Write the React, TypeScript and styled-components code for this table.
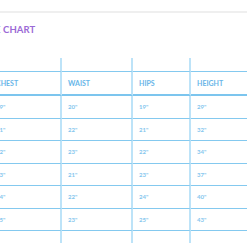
import React from 'react'
import styled, { createGlobalStyle } from 'styled-components'

const GlobalStyle = createGlobalStyle`
  html, body {
    margin: 0;
    padding: 0;
    background: #ffffff;
    overflow: hidden;
  }
  body {
    font-family: Lato, "Liberation Sans", sans-serif;
  }
`

const columns = [
  { key: 'chest', label: 'CHEST', width: 72 },
  { key: 'waist', label: 'WAIST', width: 71 },
  { key: 'hips', label: 'HIPS', width: 58 },
  { key: 'height', label: 'HEIGHT', width: 80 },
]

const rows = [
  { chest: '19"', waist: '20"', hips: '19"', height: '29"' },
  { chest: '21"', waist: '22"', hips: '21"', height: '32"' },
  { chest: '22"', waist: '23"', hips: '22"', height: '34"' },
  { chest: '23"', waist: '21"', hips: '23"', height: '37"' },
  { chest: '24"', waist: '22"', hips: '24"', height: '40"' },
  { chest: '25"', waist: '23"', hips: '25"', height: '43"' },
]

const Page = styled.div`
  width: 247px;
  height: 247px;
  overflow: hidden;
  padding-top: 11px;
  box-sizing: border-box;
`

const Rule = styled.div`
  height: 2px;
  background: #efefef;
`

const Title = styled.h2`
  margin: 11px 0 0 -19px;
  font-size: 9.5px;
  line-height: 12px;
  font-weight: 700;
  letter-spacing: 0.1px;
  color: #9b6ad6;
  white-space: nowrap;
`

const Grid = styled.div<{ cols: string }>`
  display: grid;
  grid-template-columns: ${p => p.cols};
  grid-template-rows: 13px 25px repeat(6, 22.5px) 12px;
  margin: 22px 0 0 -10px;
  width: max-content;
`

const Cell = styled.div<{ kind: 'spacer' | 'head' | 'body' }>`
  box-sizing: border-box;
  display: flex;
  align-items: center;
  padding-left: 6px;
  border-right: 2px solid #bde3f8;
  white-space: nowrap;
  ${p => p.kind === 'head' && `
    border-top: 1px solid #84c9ef;
    border-bottom: 2px solid #7cc5ee;
    font-size: 7px;
    font-weight: 700;
    color: #68b5e8;
  `}
  ${p => p.kind === 'body' && `
    border-bottom: 1px solid #84c9ef;
    font-size: 6px;
    font-weight: 700;
    color: #84c6ee;
  `}
`

const App = () => {
  const template = columns.map(c => `${c.width}px`).join(' ')

  return (
    <Page>
      <GlobalStyle />
      <Rule />
      <Title>SIZE CHART</Title>
      <Grid cols={template}>
        {columns.map(c => <Cell key={`top-${c.key}`} kind="spacer" />)}
        {columns.map(c => <Cell key={`head-${c.key}`} kind="head">{c.label}</Cell>)}
        {rows.map((r, i) =>
          columns.map(c => (
            <Cell key={`${i}-${c.key}`} kind="body">{r[c.key as keyof typeof r]}</Cell>
          ))
        )}
        {columns.map(c => <Cell key={`end-${c.key}`} kind="spacer" />)}
      </Grid>
    </Page>
  )
}

export default App
